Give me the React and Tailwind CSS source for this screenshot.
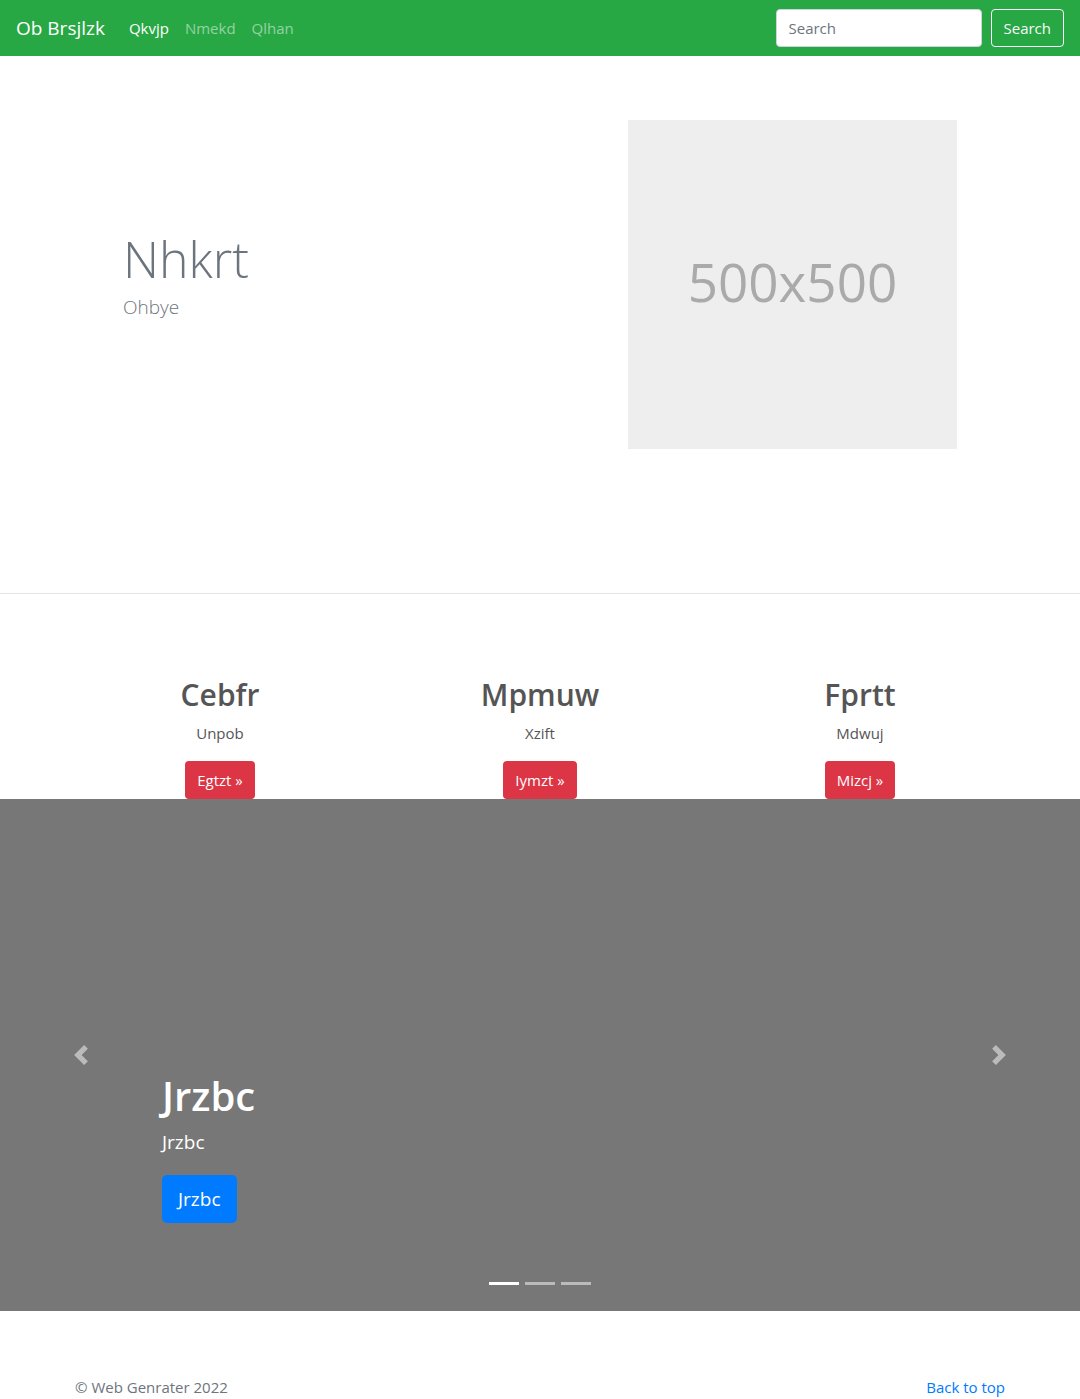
import React from 'react';

const features = [
  { title: 'Cebfr', text: 'Unpob', btn: 'Egtzt' },
  { title: 'Mpmuw', text: 'Xzift', btn: 'Iymzt' },
  { title: 'Fprtt', text: 'Mdwuj', btn: 'Mizcj' },
];

const App = () => {
  return (
    <div className="w-[1080px] min-h-[1399px] bg-white font-['Open_Sans',sans-serif]">
      {/* Navbar */}
      <nav className="h-[56px] bg-[#28a745] flex items-center px-4">
        <span className="text-white text-[19px] leading-[30px] mr-[16px]">Ob Brsjlzk</span>
        <div className="flex text-[15px]">
          <a className="px-2 text-white">Qkvjp</a>
          <a className="px-2 text-white/50">Nmekd</a>
          <a className="px-2 text-white/50">Qlhan</a>
        </div>
        <div className="ml-auto flex items-center gap-[9px]">
          <div className="w-[206px] h-[38px] bg-white border border-[#ced4da] rounded-[4px] px-3 flex items-center text-[15px] text-[#6c757d]">
            Search
          </div>
          <button className="h-[38px] px-3 border border-[#f8f9fa] rounded-[4px] text-[#f8f9fa] text-[15px]">
            Search
          </button>
        </div>
      </nav>

      {/* Hero */}
      <section className="h-[538px] border-b border-[#e5e5e5]">
        <div className="w-[960px] mx-auto px-[15px] flex pt-[64px]">
          <div className="flex-1 flex flex-col justify-center pl-[48px] h-[329px] pb-[18px]">
            <h1 className="text-[50px] leading-[1.2] font-light text-[#6c757d]">Nhkrt</h1>
            <p className="mt-[4px] text-[19px] leading-[1.5] font-light text-[#6c757d]">Ohbye</p>
          </div>
          <div className="flex-1 flex justify-end pr-[48px]">
            <div className="w-[329px] h-[329px] bg-[#eeeeee] flex items-center justify-center text-[#aaaaaa] text-[53px] pb-[6px]">
              500x500
            </div>
          </div>
        </div>
      </section>

      {/* Features */}
      <section className="pt-[83px]">
        <div className="w-[960px] mx-auto grid grid-cols-3">
          {features.map((f) => (
            <div key={f.title} className="flex flex-col items-center text-[#555555]">
              <h2 className="text-[30px] leading-[1.2] font-semibold">{f.title}</h2>
              <p className="mt-[8px] text-[15px] leading-[24px]">{f.text}</p>
              <button className="mt-[16px] h-[38px] px-3 bg-[#dc3545] text-white text-[15px] rounded-[4px]">
                {f.btn} &raquo;
              </button>
            </div>
          ))}
        </div>
      </section>

      {/* Carousel */}
      <section className="relative h-[512px] bg-[#777777] flex flex-col justify-end pl-[162px] pb-[88px]">
        <h1 className="text-white text-[40px] leading-[1.2] font-semibold">Jrzbc</h1>
        <p className="text-white text-[19px] leading-[1.5] mt-[8px]">Jrzbc</p>
        <div className="mt-[19px]">
          <button className="h-[48px] px-4 bg-[#007bff] text-white text-[19px] rounded-[5px]">Jrzbc</button>
        </div>

        <div className="absolute left-0 top-0 bottom-0 w-[162px] flex items-center justify-center opacity-50">
          <svg width="20" height="20" viewBox="0 0 8 8" fill="#fff">
            <path d="M5.25 0l-4 4 4 4 1.5-1.5L4.25 4l2.5-2.5L5.25 0z" />
          </svg>
        </div>
        <div className="absolute right-0 top-0 bottom-0 w-[162px] flex items-center justify-center opacity-50">
          <svg width="20" height="20" viewBox="0 0 8 8" fill="#fff">
            <path d="M2.75 0l-1.5 1.5L3.75 4l-2.5 2.5L2.75 8l4-4-4-4z" />
          </svg>
        </div>

        <div className="absolute left-0 right-0 bottom-[26px] flex justify-center gap-[6px]">
          <span className="w-[30px] h-[3px] bg-white" />
          <span className="w-[30px] h-[3px] bg-white/50" />
          <span className="w-[30px] h-[3px] bg-white/50" />
        </div>
      </section>

      {/* Footer */}
      <footer className="pt-[64px] pb-[12px]">
        <div className="w-[960px] mx-auto px-[15px] flex justify-between text-[15px] leading-[24px]">
          <p className="text-[#6c757d]">&copy; Web Genrater 2022</p>
          <a className="text-[#007bff]">Back to top</a>
        </div>
      </footer>
    </div>
  );
};

export default App;
